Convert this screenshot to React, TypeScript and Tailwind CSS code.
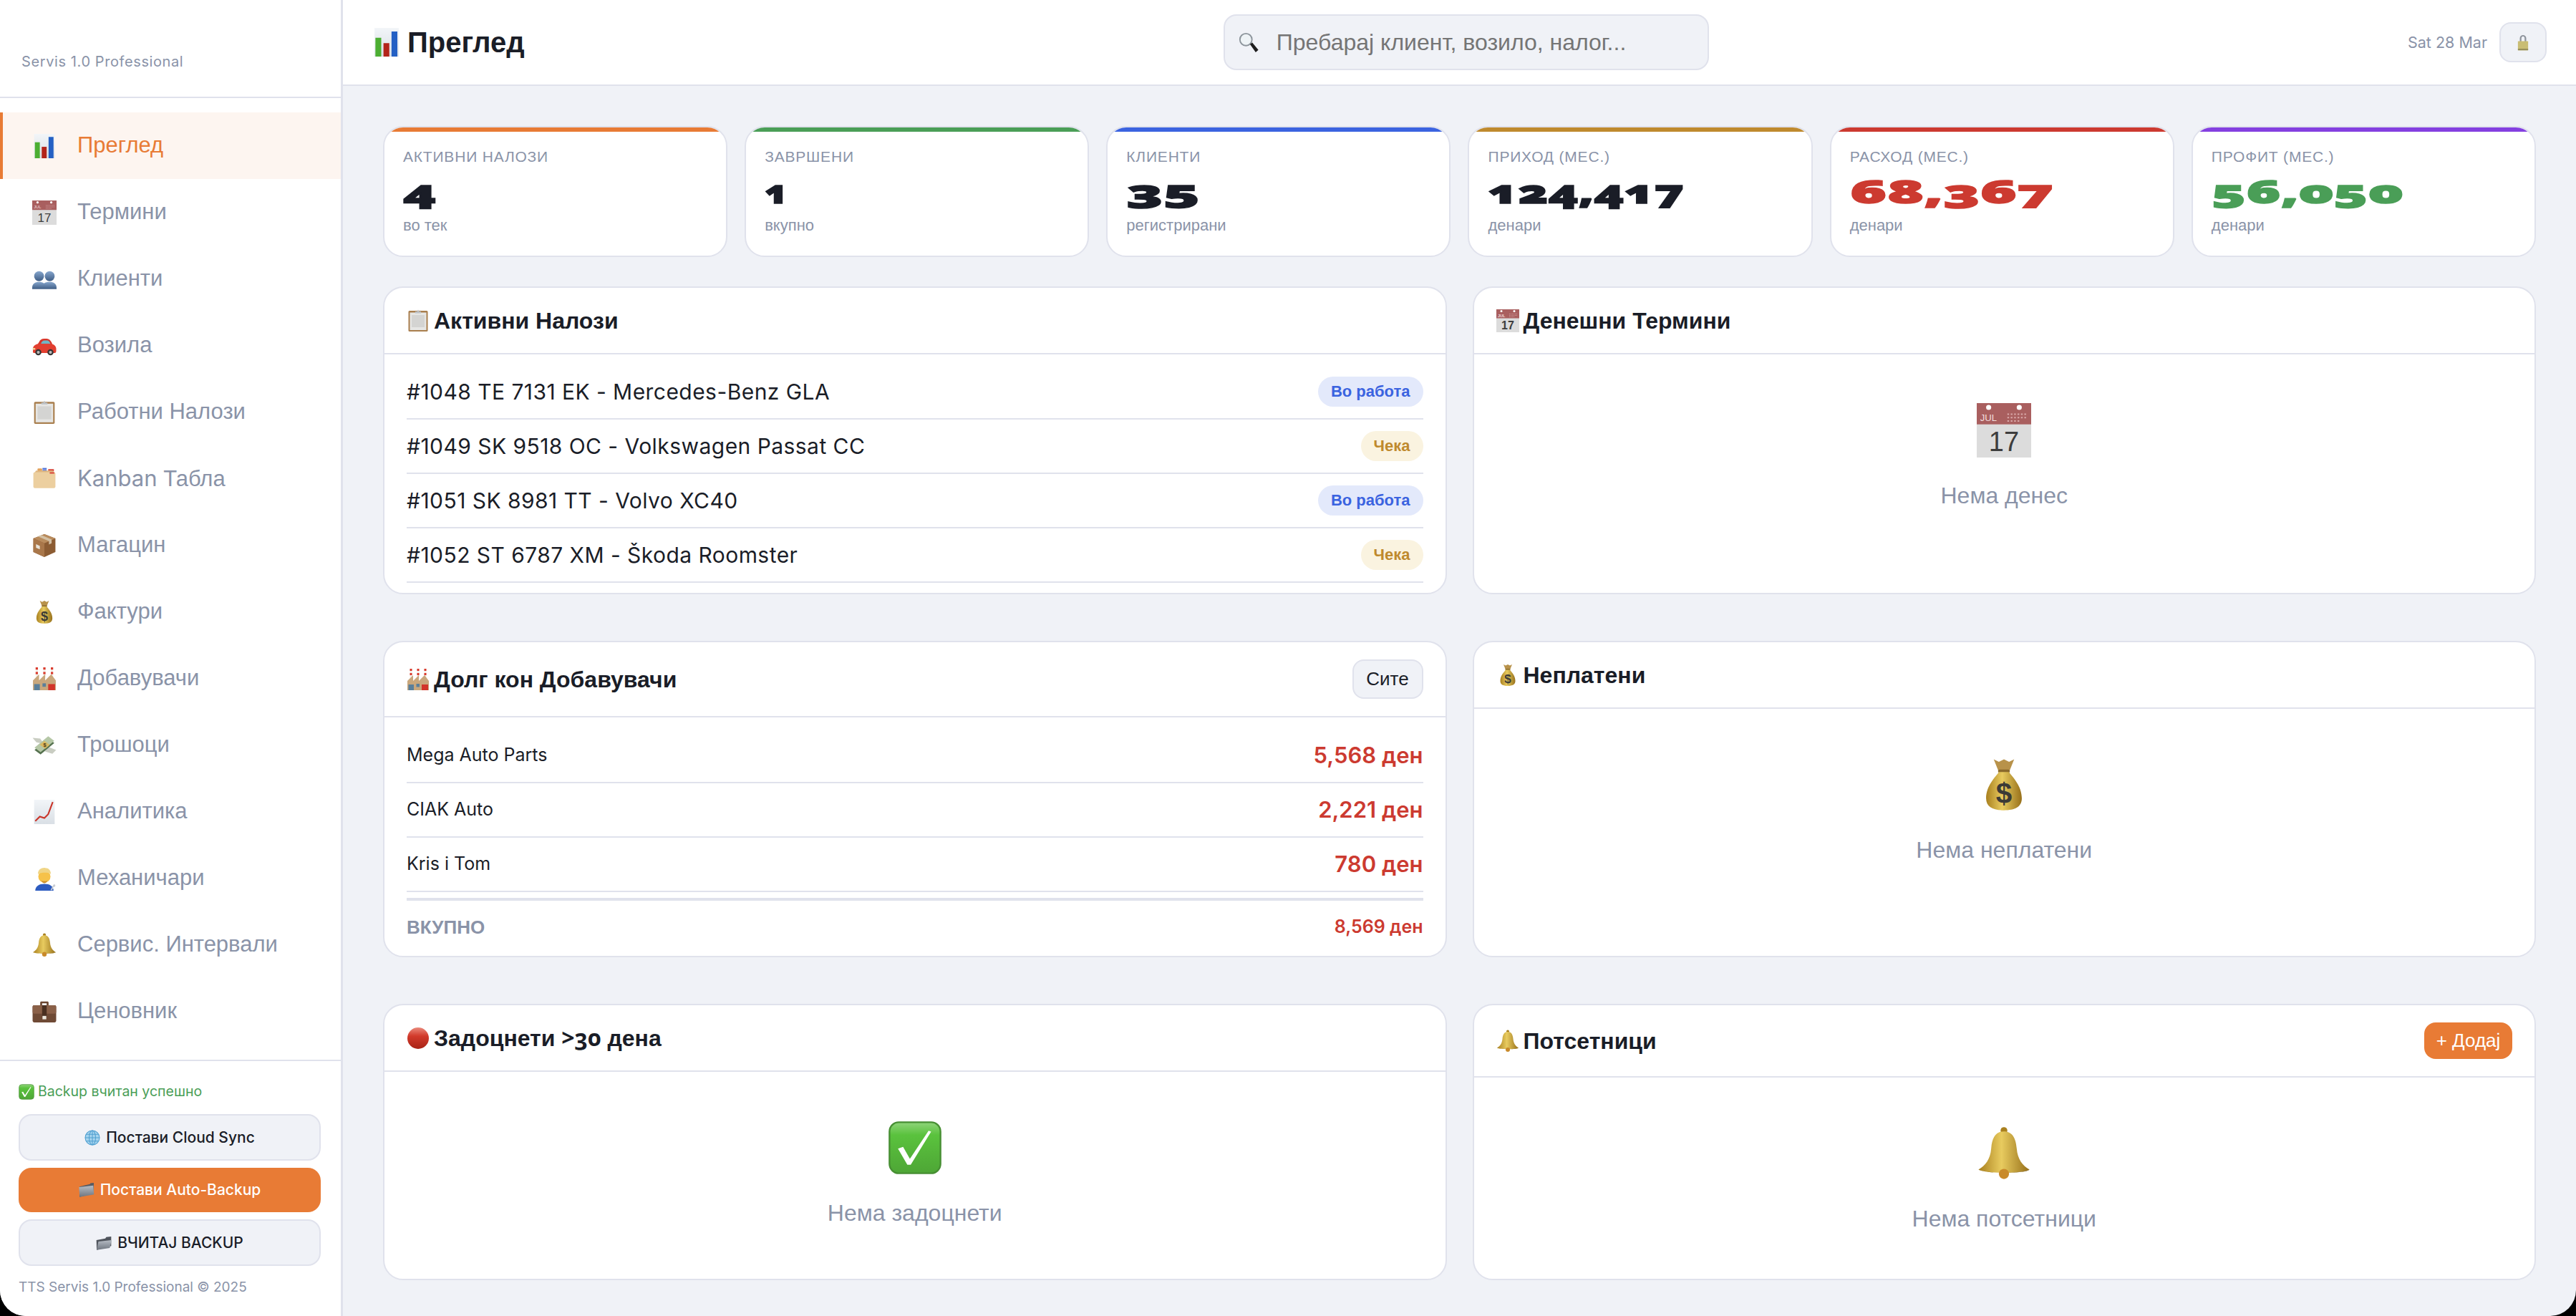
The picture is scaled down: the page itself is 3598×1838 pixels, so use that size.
import type { ReactNode } from "react";

type IconName =
  | "chart" | "calendar" | "people" | "car" | "clipboard" | "cardbox" | "package" | "bag" | "factory"
  | "wings" | "trend" | "mechanic" | "bell" | "briefcase" | "check" | "globe" | "folder" | "folderOpen"
  | "search" | "lock" | "red";

function Emoji({ name, size }: { name: IconName; size: number }) {
  return (
    <svg width={size} height={size} viewBox="0 0 64 64" className="shrink-0">
      <defs>
        <linearGradient id="gold" x1="0" y1="0" x2="1" y2="0">
          <stop offset="0" stopColor="#a9801f" />
          <stop offset="0.45" stopColor="#e8cb5f" />
          <stop offset="1" stopColor="#97701a" />
        </linearGradient>
        <linearGradient id="bust" x1="0" y1="0" x2="0" y2="1">
          <stop offset="0" stopColor="#86a6cd" />
          <stop offset="1" stopColor="#3f5d85" />
        </linearGradient>
        <linearGradient id="okgreen" x1="0" y1="0" x2="0" y2="1">
          <stop offset="0" stopColor="#8fd47a" />
          <stop offset="0.25" stopColor="#5ac23d" />
          <stop offset="1" stopColor="#4ea636" />
        </linearGradient>
        <linearGradient id="redball" x1="0" y1="0" x2="0" y2="1">
          <stop offset="0" stopColor="#ea8a7c" />
          <stop offset="0.4" stopColor="#d23a2b" />
          <stop offset="1" stopColor="#a82316" />
        </linearGradient>
        <linearGradient id="steel" x1="0" y1="0" x2="0" y2="1">
          <stop offset="0" stopColor="#b6bcc4" />
          <stop offset="1" stopColor="#6f7680" />
        </linearGradient>
        <linearGradient id="paper" x1="0" y1="0" x2="0" y2="1">
          <stop offset="0" stopColor="#f2f5f8" />
          <stop offset="1" stopColor="#d9dfe5" />
        </linearGradient>
      </defs>
      {name === "chart" && (
        <g>
          <rect x="5" y="0" width="54" height="64" fill="url(#paper)" />
          <rect x="7" y="22" width="13" height="42" fill="#4cae32" />
          <rect x="25" y="34" width="13" height="30" fill="#b3241a" />
          <rect x="43" y="8" width="13" height="56" fill="#2460c4" />
        </g>
      )}
      {name === "calendar" && (
        <g>
          <rect x="0" y="0" width="64" height="26" fill="#a95f5f" />
          <rect x="0" y="25" width="64" height="39" fill="#dcdcdc" />
          <circle cx="14" cy="5" r="3" fill="#fff" />
          <circle cx="50" cy="5" r="3" fill="#fff" />
          <text x="4" y="21" fontSize="11" fontFamily="Liberation Sans" fill="#f2dede">JUL</text>
          <path d="M36 13h24M36 17h24M36 21h14" stroke="#d9a9a9" strokeWidth="1.6" strokeDasharray="2 2" />
          <text x="32" y="56" textAnchor="middle" fontSize="32" fontFamily="Liberation Sans" fill="#3d3d3d">17</text>
        </g>
      )}
      {name === "people" && (
        <g fill="url(#bust)">
          <circle cx="18" cy="24" r="13" />
          <circle cx="46" cy="24" r="13" />
          <path d="M0 54c0-10 8-15 18-15 5 0 9 1 13 4 4-3 8-4 15-4 10 0 18 5 18 15v4H0z" />
        </g>
      )}
      {name === "car" && (
        <g>
          <path d="M18 22c2-6 7-9 14-9h6c6 0 10 4 13 10l2 5H14z" fill="#d8362a" />
          <path d="M23 27c1-6 5-9 10-9h6c4 0 7 3 9 9z" fill="#6fb6c4" />
          <path d="M2 40c0-7 6-12 14-13h32c8 0 14 5 15 12v7c0 3-2 5-5 5H6c-3 0-5-2-4-6z" fill="#e23f30" />
          <rect x="1" y="38" width="7" height="4" fill="#f6e3a0" />
          <circle cx="16" cy="49" r="8" fill="#333" />
          <circle cx="16" cy="49" r="4" fill="#b9b9b9" />
          <circle cx="48" cy="49" r="8" fill="#333" />
          <circle cx="48" cy="49" r="4" fill="#b9b9b9" />
        </g>
      )}
      {name === "clipboard" && (
        <g>
          <rect x="5" y="4" width="54" height="58" rx="3" fill="#a97f4e" />
          <rect x="9" y="9" width="46" height="49" fill="#e6e6e4" />
          <rect x="14" y="16" width="36" height="34" fill="#d4d4d2" />
          <path d="M24 6h5l3-5 3 5h5v5H24z" fill="#bcc0c4" />
        </g>
      )}
      {name === "cardbox" && (
        <g>
          <rect x="14" y="4" width="12" height="10" rx="2" fill="#e2a25c" />
          <rect x="27" y="3" width="11" height="4" fill="#4a6fd8" />
          <rect x="27" y="8" width="11" height="4" fill="#4a6fd8" />
          <rect x="42" y="6" width="15" height="6" fill="#d84a3e" />
          <path d="M6 16l4-6h44l4 6z" fill="#dfb780" />
          <rect x="3" y="14" width="58" height="42" rx="4" fill="#eccf9f" />
          <rect x="46" y="14" width="12" height="4" fill="#d84a3e" />
        </g>
      )}
      {name === "package" && (
        <g>
          <path d="M32 2l29 11v36L32 62 3 49V13z" fill="#8c5c33" />
          <path d="M3 13l29 13 29-13L32 2z" fill="#b98b5c" />
          <path d="M3 13l29 13v36L3 49z" fill="#a9774a" />
          <path d="M15 8l29 12v9l7-3V16L24 4z" fill="#d3c0a4" />
          <rect x="10" y="30" width="10" height="9" fill="#e9e4da" transform="skewY(24) translate(0,-6)" />
        </g>
      )}
      {name === "bag" && (
        <g>
          <path d="M20 2l6 3 6-3 6 3 6-3-6 15H26z" fill="#b8924a" />
          <rect x="25" y="14" width="14" height="4" rx="2" fill="#8a6a2c" />
          <path d="M26 17h12c4 6 15 16 15 31 0 10-8 14-21 14S11 58 11 48c0-15 11-25 15-31z" fill="url(#gold)" />
          <text x="32" y="54" textAnchor="middle" fontSize="34" fontWeight="700" fontFamily="Liberation Sans" fill="#3b3a36">$</text>
        </g>
      )}
      {name === "factory" && (
        <g>
          <rect x="9" y="2" width="6" height="26" fill="#f4f0ea" />
          <rect x="9" y="2" width="6" height="6" fill="#d9382b" />
          <rect x="9" y="14" width="6" height="6" fill="#d9382b" />
          <rect x="29" y="2" width="6" height="26" fill="#f4f0ea" />
          <rect x="29" y="2" width="6" height="6" fill="#d9382b" />
          <rect x="29" y="14" width="6" height="6" fill="#d9382b" />
          <rect x="49" y="2" width="6" height="26" fill="#f4f0ea" />
          <rect x="49" y="2" width="6" height="6" fill="#d9382b" />
          <rect x="49" y="14" width="6" height="6" fill="#d9382b" />
          <path d="M2 62V36l16-16v16l16-16v16l16-16 12 16v26z" fill="#c9a77c" />
          <rect x="5" y="46" width="15" height="16" fill="#5a7f9a" />
          <rect x="27" y="44" width="9" height="9" fill="#5a7f9a" />
          <rect x="42" y="46" width="18" height="16" fill="#d2352a" />
        </g>
      )}
      {name === "wings" && (
        <g>
          <path d="M1 12l20 2 10 14-20-4z" fill="#c9cdc2" />
          <path d="M63 44l-20-8-10 12 20 6z" fill="#c9cdc2" />
          <path d="M6 44l36-30 16 12-36 30z" fill="#55714f" />
          <path d="M6 38l36-30 16 12-36 30z" fill="#b5c7a6" />
          <path d="M20 30l12-10 14 11-12 10z" fill="#d9b860" />
          <text x="33" y="36" textAnchor="middle" fontSize="14" fontWeight="700" fontFamily="Liberation Sans" fill="#4a3b18">$</text>
        </g>
      )}
      {name === "trend" && (
        <g>
          <rect x="5" y="0" width="54" height="64" fill="url(#paper)" />
          <path d="M8 56l12-12 12 4 10-10 12-32" fill="none" stroke="#c9352a" strokeWidth="4" />
        </g>
      )}
      {name === "mechanic" && (
        <g>
          <path d="M8 64c0-12 10-18 24-18s24 6 24 18z" fill="#2d5cc0" />
          <circle cx="32" cy="27" r="16" fill="#f6c24a" />
          <path d="M15 20c0-12 10-17 19-16 9 0 15 6 15 16-6-5-24-5-34 0z" fill="#f0d586" />
          <path d="M24 37c3 3 13 3 16 0-1 5-5 7-8 7s-7-2-8-7z" fill="#c98f2e" />
          <path d="M48 62l8-14 3-1 2 4-2 3-3 0-4 9z" fill="#c8ccd2" />
        </g>
      )}
      {name === "bell" && (
        <g>
          <circle cx="32" cy="5" r="4" fill="#a9801f" />
          <path d="M32 6c10 0 14 8 15 20 1 13 7 20 15 25-8 5-52 5-60 0 8-5 14-12 15-25 1-12 5-20 15-20z" fill="url(#gold)" />
          <path d="M2 51c12 5 48 5 60 0-4 5-50 5-60 0z" fill="#80601a" />
          <circle cx="32" cy="56" r="6" fill="#c98a2a" />
        </g>
      )}
      {name === "briefcase" && (
        <g>
          <path d="M21 16v-8c0-2 1-3 3-3h16c2 0 3 1 3 3v8h-5v-6H26v6z" fill="#6b4630" />
          <rect x="1" y="15" width="62" height="45" rx="4" fill="#6f4a35" />
          <rect x="1" y="15" width="62" height="22" rx="4" fill="#8a6048" />
          <rect x="26" y="15" width="12" height="30" fill="#4a2f20" />
          <rect x="27" y="43" width="10" height="9" fill="#ece6dc" />
        </g>
      )}
      {name === "check" && (
        <g>
          <rect x="2" y="2" width="60" height="60" rx="11" fill="url(#okgreen)" stroke="#478f33" strokeWidth="2" />
          <path d="M12 33l6-2 8 14L48 12l3 1-24 39h-4z" fill="#fff" />
        </g>
      )}
      {name === "globe" && (
        <g>
          <circle cx="32" cy="32" r="30" fill="#a6d4ee" />
          <g fill="none" stroke="#4f9fd0" strokeWidth="3">
            <circle cx="32" cy="32" r="29" />
            <ellipse cx="32" cy="32" rx="13" ry="29" />
            <path d="M32 3v58M3 32h58M7 18h50M7 46h50" />
          </g>
        </g>
      )}
      {name === "folder" && (
        <g>
          <path d="M3 18l40-9c2 0 3-2 4-5l14-1v42L3 60z" fill="#565b63" />
          <path d="M1 20l58-6 3 36-58 10z" fill="url(#steel)" />
        </g>
      )}
      {name === "folderOpen" && (
        <g>
          <path d="M2 20l36-6 4-6 20-2v38L3 60z" fill="#4f545c" />
          <path d="M10 26l54-6-8 32-53 8z" fill="url(#steel)" />
        </g>
      )}
      {name === "search" && (
        <g>
          <circle cx="24" cy="24" r="18" fill="#eef3f6" stroke="#8d959c" strokeWidth="4" />
          <path d="M36 38l7-5 18 22-8 7z" fill="#1d1d1d" />
        </g>
      )}
      {name === "lock" && (
        <g>
          <path d="M20 30V17c0-16 24-16 24 0v13h-6V17c0-9-12-9-12 0v13z" fill="#8e949c" />
          <rect x="13" y="28" width="38" height="34" rx="2" fill="#c9bd74" />
          <rect x="13" y="56" width="38" height="6" fill="#98905a" />
        </g>
      )}
      {name === "red" && <circle cx="32" cy="32" r="30" fill="url(#redball)" />}
    </svg>
  );
}

const navItems: { icon: IconName; label: ReactNode }[] = [
  { icon: "chart", label: "Преглед" },
  { icon: "calendar", label: "Термини" },
  { icon: "people", label: "Клиенти" },
  { icon: "car", label: "Возила" },
  { icon: "clipboard", label: "Работни Налози" },
  { icon: "cardbox", label: <><span className="font-['Inter',sans-serif]">Kanban</span> Табла</> },
  { icon: "package", label: "Магацин" },
  { icon: "bag", label: "Фактури" },
  { icon: "factory", label: "Добавувачи" },
  { icon: "wings", label: "Трошоци" },
  { icon: "trend", label: "Аналитика" },
  { icon: "mechanic", label: "Механичари" },
  { icon: "bell", label: "Сервис. Интервали" },
  { icon: "briefcase", label: "Ценовник" },
];

const stats = [
  { label: "АКТИВНИ НАЛОЗИ", value: "4", sub: "во тек", bar: "bg-[#e87b35]", color: "text-[#1a1d27] scale-x-[1.7]" },
  { label: "ЗАВРШЕНИ", value: "1", sub: "вкупно", bar: "bg-[#4a9e57]", color: "text-[#1a1d27] scale-x-[1.2]" },
  { label: "КЛИЕНТИ", value: "35", sub: "регистрирани", bar: "bg-[#3b63e0]", color: "text-[#1a1d27] scale-x-[1.9]" },
  { label: "ПРИХОД (МЕС.)", value: "124,417", sub: "денари", bar: "bg-[#bf8a2e]", color: "text-[#1a1d27] scale-x-[1.55]" },
  { label: "РАСХОД (МЕС.)", value: "68,367", sub: "денари", bar: "bg-[#cc3a30]", color: "text-[#cc3a30] scale-x-[1.9]" },
  { label: "ПРОФИТ (МЕС.)", value: "56,050", sub: "денари", bar: "bg-[#8440e0]", color: "text-[#4a9e57] scale-x-[1.78]" },
];

const orders = [
  { text: "#1048 TE 7131 EK - Mercedes-Benz GLA", status: "Во работа", blue: true },
  { text: "#1049 SK 9518 OC - Volkswagen Passat CC", status: "Чека", blue: false },
  { text: "#1051 SK 8981 TT - Volvo XC40", status: "Во работа", blue: true },
  { text: "#1052 ST 6787 XM - Škoda Roomster", status: "Чека", blue: false },
];

const debts = [
  { name: "Mega Auto Parts", amount: "5,568 ден" },
  { name: "CIAK Auto", amount: "2,221 ден" },
  { name: "Kris i Tom", amount: "780 ден" },
];

function Panel({ icon, title, action, children }: { icon: IconName; title: ReactNode; action?: ReactNode; children: ReactNode }) {
  return (
    <div className="overflow-hidden rounded-[28px] border-2 border-[#e0e2ec] bg-white">
      <div className="flex items-center justify-between border-b-2 border-[#e0e2ec] px-[31px] py-6">
        <div className="flex h-[43px] items-center gap-[6px] text-[32px] font-bold text-[#1a1d27]">
          <Emoji name={icon} size={32} />
          <span>{title}</span>
        </div>
        {action}
      </div>
      {children}
    </div>
  );
}

function Empty({ icon, text }: { icon: IconName; text: string }) {
  return (
    <div className="flex flex-col items-center pt-[68px] pb-[64px]">
      <div className="flex h-[76px] items-center">
        <Emoji name={icon} size={76} />
      </div>
      <div className="mt-[33px] text-[32px] leading-[40px] text-[#8a93a8]">{text}</div>
    </div>
  );
}

function SideButton({ icon, text, primary }: { icon: IconName; text: string; primary?: boolean }) {
  return (
    <button
      className={
        primary
          ? "flex h-[62px] w-[422px] items-center justify-center gap-[8px] rounded-[18px] bg-[#e87b35] font-['Inter',sans-serif] text-[21px] font-medium text-white"
          : "flex h-[65px] w-[422px] items-center justify-center gap-[8px] rounded-[18px] border-2 border-[#e0e2ec] bg-[#f0f2f7] font-['Inter',sans-serif] text-[21px] font-medium text-[#1a1d27]"
      }
    >
      <Emoji name={icon} size={22} />
      {text}
    </button>
  );
}

export default function App() {
  return (
    <div className="h-screen w-screen bg-black font-['Liberation_Sans',sans-serif]">
      <div className="flex h-full overflow-hidden rounded-b-[36px] bg-[#f0f2f7]">
        {/* Sidebar */}
        <aside className="flex h-full w-[479px] shrink-0 flex-col border-r-[3px] border-[#e0e2ec] bg-white">
          <div className="flex h-[137px] items-end border-b-2 border-[#e0e2ec] pb-[35px] pl-[30px] font-['Inter',sans-serif] text-[20px] leading-[28px] tracking-[0.6px] text-[#8a93a8]">
            Servis 1.0 Professional
          </div>
          <nav className="pt-[20px] pb-[21px]">
            {navItems.map((item, i) => (
              <div
                key={i}
                className={
                  i === 0
                    ? "flex h-[93px] items-center gap-[29px] border-l-4 border-[#e87b35] bg-[#fdf5f0] pl-[41px] text-[31px] text-[#e87b35]"
                    : "flex h-[93px] items-center gap-[29px] border-l-4 border-transparent pl-[41px] text-[31px] text-[#8a93a8]"
                }
              >
                <Emoji name={item.icon} size={34} />
                <span>{item.label}</span>
              </div>
            ))}
          </nav>
          <div className="flex flex-1 flex-col border-t-2 border-[#e0e2ec] pt-[29px] pl-[26px]">
            <div className="flex h-[28px] items-center gap-[5px] font-['Inter',sans-serif] text-[19.5px] text-[#4a9e57]">
              <Emoji name="check" size={22} />
              Backup вчитан успешно
            </div>
            <div className="mt-[17px] flex flex-col gap-[10px]">
              <SideButton icon="globe" text="Постави Cloud Sync" />
              <SideButton icon="folder" text="Постави Auto-Backup" primary />
              <SideButton icon="folderOpen" text="ВЧИТАЈ BACKUP" />
            </div>
            <div className="mt-[17px] font-['Inter',sans-serif] text-[19px] leading-[26px] text-[#8a93a8]">
              TTS Servis 1.0 Professional © 2025
            </div>
          </div>
        </aside>

        {/* Main */}
        <main className="min-w-0 flex-1 overflow-hidden">
          <header className="flex h-[120px] items-center justify-between border-b-2 border-[#e0e2ec] bg-white pr-[41px] pl-[41px]">
            <div className="flex items-center gap-[9px] text-[40px] font-bold text-[#1a1d27]">
              <Emoji name="chart" size={40} />
              Преглед
            </div>
            <div className="flex h-[78px] w-[678px] items-center gap-[24px] rounded-[18px] border-2 border-[#e0e2ec] bg-[#f0f2f7] pl-[18px]">
              <Emoji name="search" size={30} />
              <input
                readOnly
                placeholder="Пребарај клиент, возило, налог..."
                className="flex-1 bg-transparent text-[32px] outline-none placeholder:text-[#757575]"
              />
            </div>
            <div className="flex items-center gap-[17px]">
              <span className="font-['Inter',sans-serif] text-[21.5px] text-[#8a93a8]">Sat 28 Mar</span>
              <button className="flex h-[56px] w-[66px] items-center justify-center rounded-[16px] border-2 border-[#e0e2ec] bg-[#f0f2f7]">
                <Emoji name="lock" size={24} />
              </button>
            </div>
          </header>

          <div className="px-[56px] pt-[56px]">
            <div className="mb-[41px] grid grid-cols-6 gap-[24px]">
              {stats.map((s) => (
                <div key={s.label} className="h-[183px] overflow-hidden rounded-[28px] border-2 border-[#e0e2ec] bg-white">
                  <div className={`h-[6px] ${s.bar}`} />
                  <div className="px-[26px] pt-[21px]">
                    <div className="text-[21px] leading-[28px] tracking-[0.8px] text-[#8a93a8]">{s.label}</div>
                    <div className={`mt-[6px] h-[56px] origin-left font-['Open_Sans',sans-serif] text-[45px] leading-[56px] font-extrabold oldstyle-nums [-webkit-text-stroke:1.5px_currentColor] ${s.color}`}>
                      {s.value}
                    </div>
                    <div className="mt-[6px] text-[22px] leading-[28px] text-[#8a93a8]">{s.sub}</div>
                  </div>
                </div>
              ))}
            </div>

            <div className="mb-[65px] grid grid-cols-2 gap-x-[36px]">
              <Panel icon="clipboard" title="Активни Налози">
                <div className="px-[31px] pt-[15px] pb-[14px]">
                  {orders.map((o) => (
                    <div key={o.text} className="flex h-[76px] items-center justify-between border-b-2 border-[#e0e2ec]">
                      <span className="font-['Inter',sans-serif] text-[30px] tracking-[0.45px] text-[#1a1d27]">{o.text}</span>
                      <span
                        className={
                          o.blue
                            ? "rounded-full bg-[#e3e9fb] px-[18px] text-[22px] leading-[42px] font-bold text-[#3b63e0]"
                            : "rounded-full bg-[#faf3e0] px-[18px] text-[22px] leading-[42px] font-bold text-[#bf8a2e]"
                        }
                      >
                        {o.status}
                      </span>
                    </div>
                  ))}
                </div>
              </Panel>
              <Panel icon="calendar" title="Денешни Термини">
                <Empty icon="calendar" text="Нема денес" />
              </Panel>
            </div>

            <div className="mb-[65px] grid grid-cols-2 gap-x-[36px]">
              <Panel
                icon="factory"
                title="Долг кон Добавувачи"
                action={
                  <button className="h-[55px] w-[99px] rounded-[16px] border-2 border-[#e0e2ec] bg-[#f0f2f7] text-[26px] text-[#1a1d27]">
                    Сите
                  </button>
                }
              >
                <div className="px-[31px] pt-[16px] pb-[3px]">
                  {debts.map((d) => (
                    <div key={d.name} className="flex h-[76px] items-center justify-between border-b-2 border-[#e0e2ec]">
                      <span className="font-['Inter',sans-serif] text-[25px] text-[#1a1d27]">{d.name}</span>
                      <span className="font-['Inter',sans-serif] text-[31px] font-semibold text-[#cc3a30]">
                        {d.amount}
                      </span>
                    </div>
                  ))}
                  <div className="mt-2 flex h-[78px] items-center justify-between border-t-4 border-[#e0e2ec]">
                    <span className="text-[26px] font-bold text-[#8a93a8]">ВКУПНО</span>
                    <span className="font-['Inter',sans-serif] text-[25px] font-semibold text-[#cc3a30]">8,569 ден</span>
                  </div>
                </div>
              </Panel>
              <Panel icon="bag" title="Неплатени">
                <Empty icon="bag" text="Нема неплатени" />
              </Panel>
            </div>

            <div className="grid grid-cols-2 gap-x-[36px]">
              <Panel
                icon="red"
                title={<>Задоцнети <span className="font-['Open_Sans',sans-serif] oldstyle-nums">&gt;30</span> дена</>}
              >
                <Empty icon="check" text="Нема задоцнети" />
              </Panel>
              <Panel
                icon="bell"
                title="Потсетници"
                action={
                  <button className="h-[51px] w-[123px] rounded-[16px] bg-[#e87b35] text-[26px] font-medium text-white">
                    + Додај
                  </button>
                }
              >
                <Empty icon="bell" text="Нема потсетници" />
              </Panel>
            </div>
          </div>
        </main>
      </div>
    </div>
  );
}
